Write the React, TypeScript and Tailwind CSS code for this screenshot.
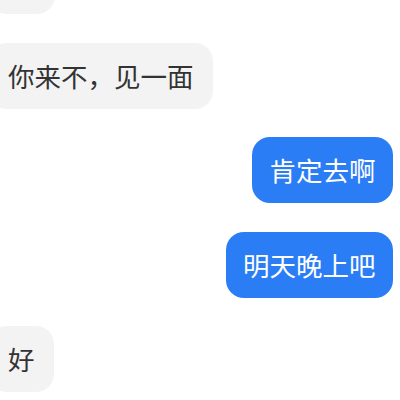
import React from "react";

const font = { fontFamily: '"Noto Sans CJK SC", "Noto Sans", sans-serif' };

function Left({ text, w }: { text?: string; w?: string }) {
  return (
    <div className="flex justify-start">
      <div
        className={`-ml-[11px] h-[66px] flex items-center rounded-[18px] bg-[#f3f3f3] px-[19px] text-[26.5px] leading-none text-[#333333] ${w ?? ""}`}
      >
        {text}
      </div>
    </div>
  );
}

function Right({ text }: { text: string }) {
  return (
    <div className="flex justify-end pr-[7px]">
      <div className="h-[66px] flex items-center rounded-[18px] bg-[#2b7df6] px-[17.5px] text-[26.5px] leading-none text-white">
        {text}
      </div>
    </div>
  );
}

export default function App() {
  return (
    <div className="w-[400px] h-[400px] overflow-hidden bg-white" style={font}>
      <div className="flex flex-col gap-[28px] -mt-[52px]">
        <Left w="w-[66px]" />
        <div className="mt-[1px]">
          <Left text="你来不，见一面" />
        </div>
        <Right text="肯定去啊" />
        <div className="mt-[1px]">
          <Right text="明天晚上吧" />
        </div>
        <Left text="好" />
      </div>
    </div>
  );
}
